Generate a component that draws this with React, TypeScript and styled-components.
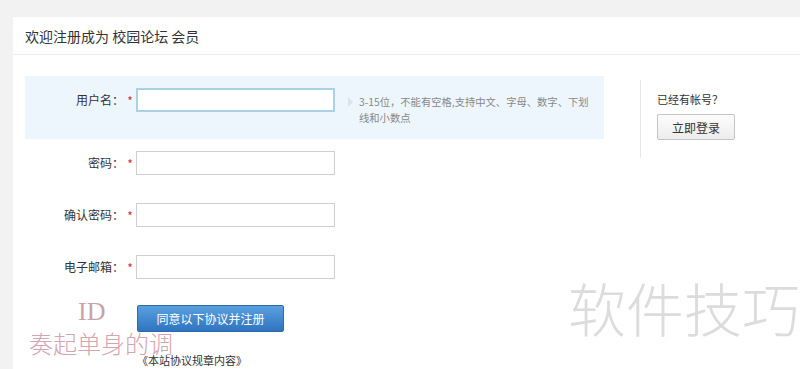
import React from "react";
import styled, { createGlobalStyle } from "styled-components";

const Global = createGlobalStyle`
  html, body { margin: 0; padding: 0; background: #f2f2f2; }
  body { font-family: "Noto Sans CJK SC", "Liberation Sans", sans-serif; color: #333; }
  * { box-sizing: border-box; }
`;

const Page = styled.div`
  position: relative;
  width: 800px;
  height: 369px;
  overflow: hidden;
  padding: 17px 0 0 13px;
`;

const Panel = styled.div`
  background: #fff;
  height: 100%;
  display: flex;
  flex-direction: column;
`;

const Header = styled.div`
  height: 38px;
  display: flex;
  align-items: center;
  padding-left: 12px;
  font-size: 14px;
  color: #333;
  border-bottom: 1px solid #ececec;
`;

const Body = styled.div`
  display: flex;
  padding: 21px 0 0 12px;
`;

const Form = styled.div`
  width: 579px;
  display: flex;
  flex-direction: column;
`;

const Row = styled.div<{ $hl?: boolean; $h: number }>`
  display: flex;
  align-items: flex-start;
  height: ${(p) => p.$h}px;
  padding-top: 12px;
  background: ${(p) => (p.$hl ? "#eef6fd" : "transparent")};
`;

const Label = styled.div`
  width: 99px;
  height: 24px;
  line-height: 24px;
  text-align: right;
  font-size: 12px;
  color: #333;
`;

const Star = styled.span`
  width: 12px;
  height: 24px;
  line-height: 26px;
  text-align: center;
  color: #c33;
  font-size: 12px;
`;

const Input = styled.div<{ $focus?: boolean }>`
  width: 199px;
  height: 24px;
  background: #fff;
  border: ${(p) => (p.$focus ? "2px solid #a8d3e4" : "1px solid #cfcfcf")};
`;

const Hint = styled.div`
  display: flex;
  margin-left: 13px;
  padding-top: 6px;
  gap: 6px;
`;

const Arrow = styled.span`
  width: 0;
  height: 0;
  margin-top: 3px;
  border-top: 5px solid transparent;
  border-bottom: 5px solid transparent;
  border-left: 5px solid #dde3e8;
`;

const HintText = styled.div`
  width: 232px;
  font-size: 10.3px;
  line-height: 16px;
  color: #888;
`;

const Actions = styled.div`
  display: flex;
  flex-direction: column;
  align-items: flex-start;
  padding: 0 0 0 112px;
  margin-top: 10px;
`;

const Submit = styled.button`
  width: 147px;
  height: 27px;
  border: 1px solid #2f69a8;
  border-radius: 2px;
  background: linear-gradient(#5aa0df, #2f74bf);
  color: #fff;
  font-family: inherit;
  font-size: 12px;
  padding: 0;
`;

const Terms = styled.div`
  margin-top: 21px;
  font-size: 11px;
  color: #333;
  line-height: 14px;
`;

const Side = styled.div`
  margin: 4px 0 0 36px;
  height: 78px;
  border-left: 1px solid #e6e6e6;
  padding: 12px 0 0 16px;
  display: flex;
  flex-direction: column;
  align-items: flex-start;
`;

const SideText = styled.div`
  font-size: 11px;
  color: #333;
  line-height: 14px;
`;

const LoginBtn = styled.button`
  margin-top: 8px;
  width: 78px;
  height: 26px;
  border: 1px solid #c4c4c4;
  border-radius: 2px;
  background: linear-gradient(#fdfdfd, #ececec);
  font-family: inherit;
  font-size: 12px;
  color: #333;
  padding: 0;
`;

const Mark = styled.div<{ $x: number; $y: number; $size: number; $color: string; $serif?: boolean }>`
  position: absolute;
  left: ${(p) => p.$x}px;
  top: ${(p) => p.$y}px;
  font-size: ${(p) => p.$size}px;
  line-height: 1;
  color: ${(p) => p.$color};
  font-family: ${(p) => (p.$serif ? '"Liberation Serif", serif' : '"Noto Sans CJK SC", sans-serif')};
  font-weight: ${(p) => (p.$serif ? 400 : 300)};
  white-space: nowrap;
  pointer-events: none;
`;

const fields = [
  { label: "密码：" },
  { label: "确认密码：" },
  { label: "电子邮箱：" },
];

export default function App() {
  return (
    <>
      <Global />
      <Page>
        <Panel>
          <Header>欢迎注册成为 校园论坛 会员</Header>
          <Body>
            <Form>
              <Row $hl $h={63}>
                <Label>用户名：</Label>
                <Star>*</Star>
                <Input $focus />
                <Hint>
                  <Arrow />
                  <HintText>3-15位，不能有空格,支持中文、字母、数字、下划线和小数点</HintText>
                </Hint>
              </Row>
              {fields.map((f) => (
                <Row key={f.label} $h={52}>
                  <Label>{f.label}</Label>
                  <Star>*</Star>
                  <Input />
                </Row>
              ))}
              <Actions>
                <Submit>同意以下协议并注册</Submit>
                <Terms>《本站协议规章内容》</Terms>
              </Actions>
            </Form>
            <Side>
              <SideText>已经有帐号？</SideText>
              <LoginBtn>立即登录</LoginBtn>
            </Side>
          </Body>
        </Panel>
        <Mark $x={78} $y={299} $size={26} $color="#c9a3ab" $serif>ID</Mark>
        <Mark $x={29} $y={331} $size={24} $color="#d2a6b1">奏起单身的调</Mark>
        <Mark $x={568} $y={278} $size={58} $color="#dcdcdc">软件技巧</Mark>
      </Page>
    </>
  );
}
